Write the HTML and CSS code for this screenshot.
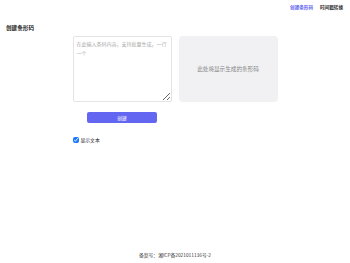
FILE: index.html
```html
<!DOCTYPE html>
<html lang="zh-CN">
<head>
  <meta charset="UTF-8" />
  <meta name="viewport" content="width=device-width, initial-scale=1.0" />
  <title>创建条形码</title>
  <link rel="stylesheet" href="styles.css">
</head>
<body>
  <nav class="topnav">
    <a class="active" href="#">创建条形码</a>
    <a href="#">时间戳转换</a>
  </nav>

  <h1>创建条形码</h1>

  <main class="workspace">
    <div class="left">
      <textarea placeholder="在此输入条码内容，支持批量生成，一行一个"></textarea>
      <div class="actions">
        <button>创建</button>
      </div>
      <label class="option">
        <input type="checkbox" checked />
        <span>显示文本</span>
      </label>
    </div>
    <div class="preview">
      <span>此处将显示生成的条形码</span>
    </div>
  </main>

  <footer>备案号：湘ICP备2021011136号-2</footer>
</body>
</html>
```

FILE: styles.css
```css
html, body {
  height: 100%;
}
body {
  margin: 0;
  font-family: "Noto Sans CJK SC", "Noto Sans", sans-serif;
  color: #222;
  background: #fff;
  display: flex;
  flex-direction: column;
}
.topnav {
  display: flex;
  justify-content: flex-end;
  gap: 7px;
  padding: 4px 7px 0;
  font-size: 4.6px;
  line-height: 7px;
}
.topnav a {
  color: #333;
  font-weight: 600;
  text-decoration: none;
}
.topnav a.active {
  color: #6366f1;
}
h1 {
  font-size: 5.6px;
  line-height: 8px;
  font-weight: 700;
  margin: 13px 0 0 6px;
}
.workspace {
  display: grid;
  grid-template-columns: 99px 99px;
  gap: 7px;
  justify-content: center;
  margin-top: 4px;
}
textarea {
  display: block;
  box-sizing: border-box;
  width: 99px;
  height: 66px;
  margin: 0;
  padding: 2px 3px;
  border: 1px solid #e4e4e4;
  border-radius: 2px;
  font-family: inherit;
  font-size: 5px;
  line-height: 9px;
  color: #333;
}
textarea::placeholder {
  color: #aaa;
}
.actions {
  display: flex;
  justify-content: center;
  margin-top: 10px;
}
button {
  width: 70px;
  height: 11px;
  padding: 0;
  border: none;
  border-radius: 2px;
  background: #6366f1;
  color: #fff;
  font-family: inherit;
  font-size: 4.8px;
  cursor: pointer;
}
.option {
  display: flex;
  align-items: center;
  gap: 2px;
  margin-top: 13px;
  font-size: 4.8px;
}
.option input {
  width: 6px;
  height: 6px;
  margin: 0;
  accent-color: #1677ff;
}
.preview {
  height: 66px;
  background: #f1f1f3;
  border-radius: 4px;
  display: flex;
  align-items: center;
  justify-content: center;
  font-size: 5.6px;
  color: #888;
}
footer {
  margin-top: auto;
  text-align: center;
  font-size: 4.8px;
  padding-bottom: 5px;
  color: #333;
}
```
